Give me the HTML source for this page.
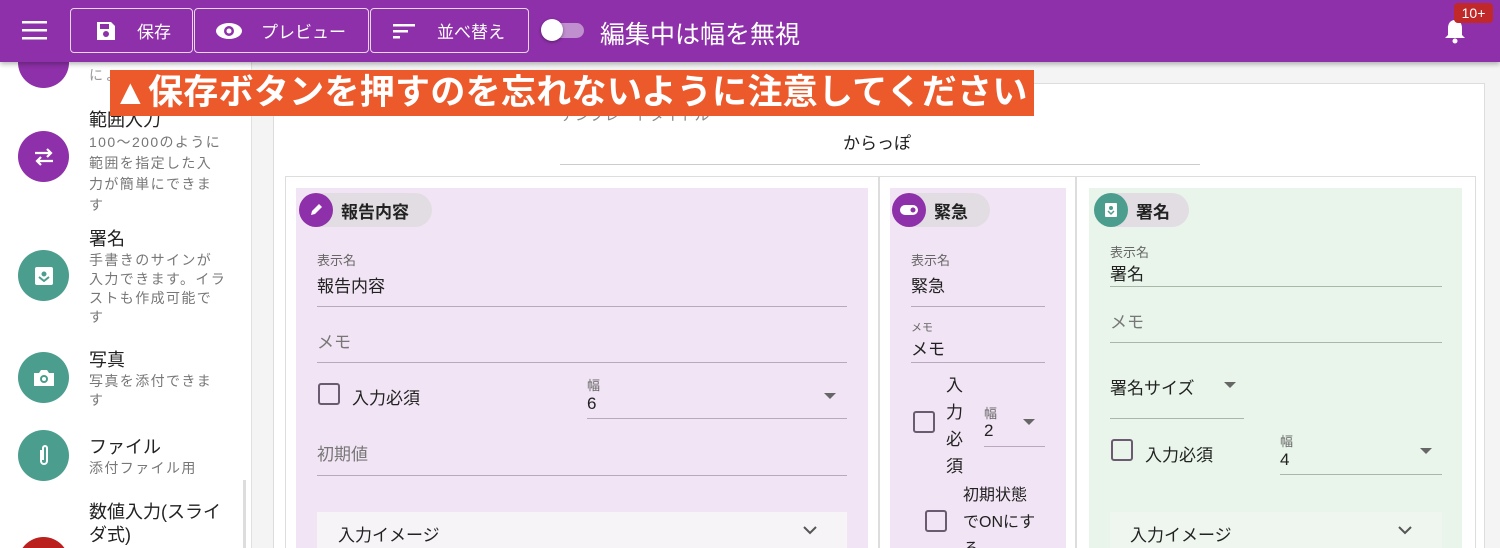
<!DOCTYPE html>
<html style="width:1500px;height:548px;overflow:hidden"><head><meta charset="utf-8"><style>
*{box-sizing:border-box;margin:0;padding:0}
body{width:1500px;height:548px;overflow:hidden;position:relative;background:#f4f4f4;font-family:"Liberation Sans","Noto Sans CJK JP",sans-serif;color:#222}
.a{position:absolute}
.hdr{left:0;top:0;width:1500px;height:62px;background:#8e30a9;box-shadow:0 2px 5px rgba(0,0,0,.3);z-index:5}
.btn{position:absolute;top:8px;height:45px;border:1.5px solid rgba(255,255,255,.8);border-radius:4px;color:#fff;font-size:17px;display:flex;align-items:center}
.side{left:0;top:62px;width:252px;height:486px;background:#fff;border-right:1px solid #e0e0e0;overflow:hidden}
.ic{position:absolute;left:18px;width:51px;height:51px;border-radius:50%;display:flex;align-items:center;justify-content:center}
.t{position:absolute;left:89px;font-size:18px;color:#222}
.d{position:absolute;left:89px;font-size:14px;color:#777;line-height:19px;letter-spacing:1.4px;white-space:nowrap}
.lbl{position:absolute;font-size:13px;color:#666}
.val{position:absolute;font-size:17px;color:#222}
.ph{position:absolute;font-size:17px;color:#777}
.ln{position:absolute;height:1px;background:#b9a8be}
.cb{position:absolute;width:22px;height:22px;border:2px solid #6b5b70;border-radius:3px}
.chip{position:absolute;height:34px;border-radius:17px;background:#e2dde3;font-weight:bold;font-size:17px;display:flex;align-items:center}
.chip i{width:34px;height:34px;border-radius:50%;display:flex;align-items:center;justify-content:center;margin-right:8px}
.tri{position:absolute;width:0;height:0;border-left:6px solid transparent;border-right:6px solid transparent;border-top:6px solid #666}
</style></head><body>
<div class="a hdr">
 <svg class="a" style="left:22px;top:21px" width="25" height="20"><rect y="0" width="25" height="2.5" fill="#fff"/><rect y="8" width="25" height="2.5" fill="#fff"/><rect y="16" width="25" height="2.5" fill="#fff"/></svg>
 <div class="btn" style="left:70px;width:123px"><svg style="margin-left:24px" width="22" height="22"><path d="M2 2h14l4 4v14H2z" fill="#fff"/><rect x="5" y="4" width="9" height="5" fill="#8e30a9"/><circle cx="11" cy="14" r="3" fill="#8e30a9"/></svg><span style="margin-left:20px">保存</span></div>
 <div class="btn" style="left:194px;width:175px"><svg style="margin-left:20px" width="28" height="20"><ellipse cx="14" cy="10" rx="13" ry="8" fill="#fff"/><circle cx="14" cy="10" r="5" fill="#8e30a9"/><circle cx="14" cy="10" r="2.5" fill="#fff"/></svg><span style="margin-left:18px">プレビュー</span></div>
 <div class="btn" style="left:370px;width:159px"><svg style="margin-left:22px" width="24" height="18"><rect y="2" width="22" height="2.5" fill="#fff"/><rect y="8" width="15" height="2.5" fill="#fff"/><rect y="14" width="7" height="2.5" fill="#fff"/></svg><span style="margin-left:20px">並べ替え</span></div>
 <div class="a" style="left:546px;top:23px;width:38px;height:15px;border-radius:8px;background:#c08fce"></div>
 <div class="a" style="left:541px;top:19px;width:22px;height:22px;border-radius:50%;background:#fff;box-shadow:0 1px 3px rgba(0,0,0,.4)"></div>
 <div class="a" style="left:600px;top:15px;color:#fff;font-size:25px">編集中は幅を無視</div>
 <svg class="a" style="left:1443px;top:18px" width="24" height="26"><path d="M12 2c-5 0-7 4-7 8v7l-3 3h20l-3-3v-7c0-4-2-8-7-8z" fill="#fff"/><circle cx="12" cy="23" r="2.5" fill="#fff"/></svg>
 <div class="a" style="left:1454px;top:3px;width:39px;height:20px;border-radius:4px;background:#c0282a;color:#fff;font-size:14px;text-align:center;line-height:20px">10+</div>
</div>
<div class="a side">
 <div class="ic" style="top:-25px;background:#8e30a9"></div>
 <div class="d" style="top:4px;color:#999">にょ</div>
 <div class="t" style="top:44px">範囲入力</div>
 <div class="d" style="top:70px;line-height:21px">100〜200のように<br>範囲を指定した入<br>力が簡単にできま<br>す</div>
 <div class="ic" style="top:69px;background:#8e30a9"><svg width="22" height="18"><path d="M2 5h16M14 1l4 4-4 4M20 13H4M8 9l-4 4 4 4" stroke="#fff" stroke-width="2.2" fill="none"/></svg></div>
 <div class="t" style="top:163px">署名</div>
 <div class="d" style="top:189px">手書きのサインが<br>入力できます。イラ<br>ストも作成可能で<br>す</div>
 <div class="ic" style="top:188px;background:#4b9e8e"><svg width="18" height="18"><rect width="18" height="18" rx="2" fill="#fff"/><circle cx="9" cy="7" r="2.5" fill="#4b9e8e"/><path d="M4 10l5 4 5-4" stroke="#4b9e8e" stroke-width="2" fill="none"/></svg></div>
 <div class="t" style="top:284px">写真</div>
 <div class="d" style="top:310px">写真を添付できま<br>す</div>
 <div class="ic" style="top:290px;background:#4b9e8e"><svg width="22" height="18"><path d="M1 4h5l2-3h6l2 3h5v13H1z" fill="#fff"/><circle cx="11" cy="10" r="4" fill="#4b9e8e"/><circle cx="11" cy="10" r="2" fill="#fff"/></svg></div>
 <div class="t" style="top:371px">ファイル</div>
 <div class="d" style="top:397px">添付ファイル用</div>
 <div class="ic" style="top:368px;background:#4b9e8e"><svg width="14" height="24"><path d="M4 6v11a3 3 0 006 0V4a2 2 0 00-4 0v12" stroke="#fff" stroke-width="2" fill="none"/></svg></div>
 <div class="t" style="top:439px;line-height:23px;white-space:nowrap">数値入力(スライ<br>ダ式)</div>
 <div class="ic" style="top:475px;background:#b9201e"></div>
 <div class="a" style="left:243px;top:418px;width:3px;height:68px;background:#ddd"></div>
</div>
<div class="a" style="left:273px;top:83px;width:1212px;height:465px;background:#fff;border:1px solid #ddd;border-bottom:none"></div>
<div class="a" style="left:560px;top:104px;font-size:15px;color:#888">テンプレートタイトル</div>
<div class="a" style="left:843px;top:129px;font-size:17px">からっぽ</div>
<div class="a" style="left:560px;top:164px;width:640px;height:1px;background:#ccc"></div>
<div class="a" style="left:285px;top:176px;width:1191px;height:372px;border:1px solid #ddd;border-bottom:none"></div>
<div class="a" style="left:878px;top:176px;width:2px;height:372px;background:#ddd"></div>
<div class="a" style="left:1075px;top:176px;width:2px;height:372px;background:#ddd"></div>
<!-- panel1 -->
<div class="a" style="left:296px;top:188px;width:572px;height:360px;background:#f1e4f4"></div>
<div class="chip" style="left:299px;top:193px;width:133px"><i style="background:#8e30a9"><svg width="14" height="14"><path d="M2 12l1-4 7-7 3 3-7 7z" fill="#fff"/></svg></i>報告内容</div>
<div class="lbl" style="left:317px;top:250px">表示名</div>
<div class="val" style="left:317px;top:272px">報告内容</div>
<div class="ln" style="left:317px;top:306px;width:530px"></div>
<div class="ph" style="left:317px;top:328px">メモ</div>
<div class="ln" style="left:317px;top:362px;width:530px"></div>
<div class="cb" style="left:318px;top:383px"></div>
<div class="val" style="left:352px;top:384px">入力必須</div>
<div class="lbl" style="left:587px;top:375px">幅</div>
<div class="val" style="left:587px;top:394px">6</div>
<div class="tri" style="left:824px;top:393px"></div>
<div class="ln" style="left:587px;top:418px;width:260px"></div>
<div class="ph" style="left:317px;top:440px">初期値</div>
<div class="ln" style="left:317px;top:475px;width:530px"></div>
<div class="a" style="left:317px;top:512px;width:530px;height:36px;background:#f6f4f6"></div>
<div class="val" style="left:338px;top:521px">入力イメージ</div>
<svg class="a" style="left:803px;top:526px" width="14" height="10"><path d="M1 1l6 6 6-6" stroke="#555" stroke-width="2" fill="none"/></svg>
<!-- panel2 -->
<div class="a" style="left:890px;top:188px;width:176px;height:360px;background:#f1e4f4"></div>
<div class="chip" style="left:892px;top:193px;width:98px"><i style="background:#8e30a9"><svg width="18" height="10"><rect width="18" height="10" rx="5" fill="#fff"/><circle cx="13" cy="5" r="2.5" fill="#8e30a9"/></svg></i>緊急</div>
<div class="lbl" style="left:911px;top:250px">表示名</div>
<div class="val" style="left:911px;top:272px">緊急</div>
<div class="ln" style="left:911px;top:306px;width:134px"></div>
<div class="lbl" style="left:911px;top:319px;font-size:11px">メモ</div>
<div class="val" style="left:911px;top:335px">メモ</div>
<div class="ln" style="left:911px;top:362px;width:134px"></div>
<div class="val" style="left:946px;top:372px;width:20px;line-height:27px">入力必須</div>
<div class="cb" style="left:913px;top:411px"></div>
<div class="lbl" style="left:984px;top:403px">幅</div>
<div class="val" style="left:984px;top:421px">2</div>
<div class="tri" style="left:1023px;top:419px"></div>
<div class="ln" style="left:984px;top:446px;width:61px"></div>
<div class="cb" style="left:925px;top:510px"></div>
<div class="val" style="left:963px;top:482px;line-height:27px;font-size:16px;white-space:nowrap;height:66px;overflow:hidden">初期状態<br>でONにす<br>る</div>
<!-- panel3 -->
<div class="a" style="left:1089px;top:188px;width:373px;height:360px;background:#e9f5ea"></div>
<div class="chip" style="left:1094px;top:193px;width:95px"><i style="background:#4b9e8e"><svg width="12" height="14"><rect width="12" height="14" rx="1" fill="#fff"/><circle cx="6" cy="5" r="2" fill="#4b9e8e"/><path d="M3 8l3 3 3-3" stroke="#4b9e8e" stroke-width="1.5" fill="none"/></svg></i>署名</div>
<div class="lbl" style="left:1110px;top:242px">表示名</div>
<div class="val" style="left:1110px;top:260px">署名</div>
<div class="ln" style="left:1110px;top:286px;width:332px;background:#a8b8a8"></div>
<div class="ph" style="left:1110px;top:308px">メモ</div>
<div class="ln" style="left:1110px;top:342px;width:332px;background:#a8b8a8"></div>
<div class="val" style="left:1110px;top:374px">署名サイズ</div>
<div class="tri" style="left:1224px;top:382px"></div>
<div class="ln" style="left:1110px;top:418px;width:134px;background:#a8b8a8"></div>
<div class="cb" style="left:1111px;top:439px"></div>
<div class="val" style="left:1145px;top:441px">入力必須</div>
<div class="lbl" style="left:1280px;top:431px">幅</div>
<div class="val" style="left:1280px;top:450px">4</div>
<div class="tri" style="left:1420px;top:448px"></div>
<div class="ln" style="left:1280px;top:474px;width:162px;background:#a8b8a8"></div>
<div class="a" style="left:1110px;top:512px;width:332px;height:36px;background:#eef6ef"></div>
<div class="val" style="left:1130px;top:521px">入力イメージ</div>
<svg class="a" style="left:1398px;top:526px" width="14" height="10"><path d="M1 1l6 6 6-6" stroke="#555" stroke-width="2" fill="none"/></svg>
<div class="a" style="left:1490px;top:62px;width:10px;height:486px;background:#f4f4f4"></div>
<!-- banner -->
<div class="a" style="left:110px;top:70px;width:924px;height:46px;background:#ec5a2c;color:#fff;font-size:35px;letter-spacing:0.3px;font-weight:bold;line-height:46px;padding-left:3px;white-space:nowrap;overflow:hidden;z-index:6">▲保存ボタンを押すのを忘れないように注意してください</div>
</body></html>
